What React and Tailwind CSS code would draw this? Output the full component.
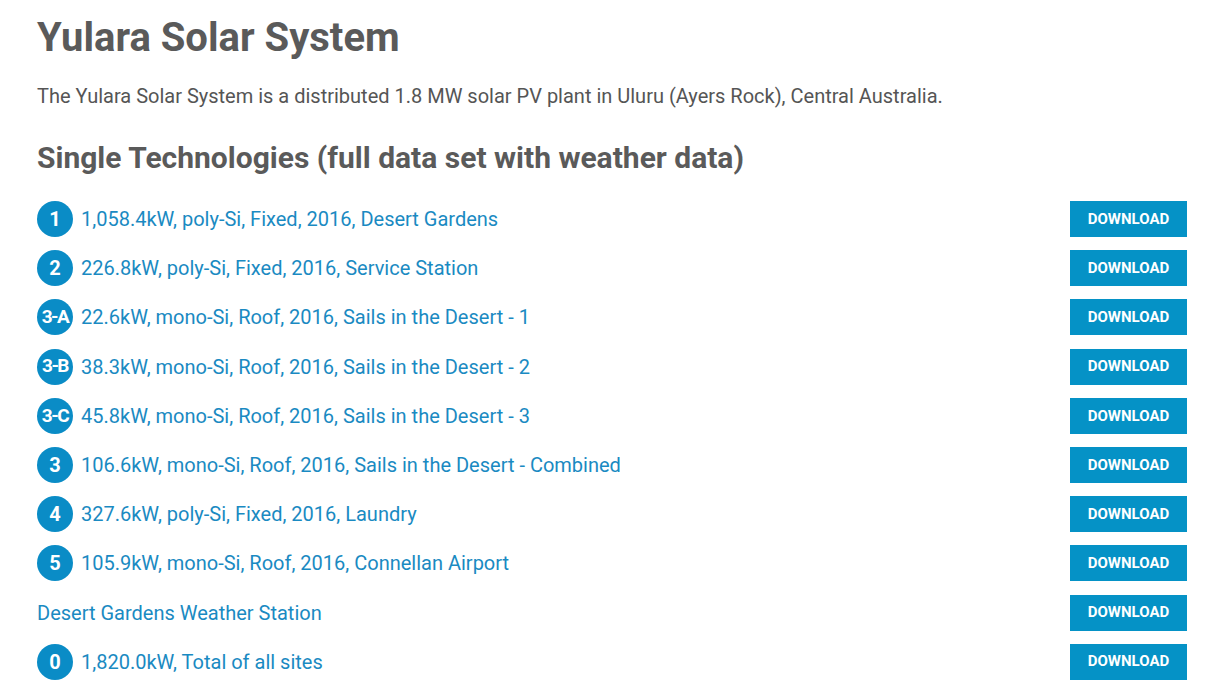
import React from 'react';

const rows = [
    { badge: '1', label: '1,058.4kW, poly-Si, Fixed, 2016, Desert Gardens' },
    { badge: '2', label: '226.8kW, poly-Si, Fixed, 2016, Service Station' },
    { badge: '3-A', label: '22.6kW, mono-Si, Roof, 2016, Sails in the Desert - 1' },
    { badge: '3-B', label: '38.3kW, mono-Si, Roof, 2016, Sails in the Desert - 2' },
    { badge: '3-C', label: '45.8kW, mono-Si, Roof, 2016, Sails in the Desert - 3' },
    { badge: '3', label: '106.6kW, mono-Si, Roof, 2016, Sails in the Desert - Combined' },
    { badge: '4', label: '327.6kW, poly-Si, Fixed, 2016, Laundry' },
    { badge: '5', label: '105.9kW, mono-Si, Roof, 2016, Connellan Airport' },
    { badge: null, label: 'Desert Gardens Weather Station' },
    { badge: '0', label: '1,820.0kW, Total of all sites' },
];

function Badge({ text }) {
    const long = text.length > 1;
    return (
        <span
            className={`w-9 h-9 rounded-full bg-[#0a8cc6] text-white font-bold flex items-center justify-center shrink-0 mr-2 overflow-hidden ${long ? 'text-[19px] tracking-[-1.5px]' : 'text-[20px]'}`}
        >
            {text}
        </span>
    );
}

export default function App() {
    return (
        <div className="w-full min-h-screen bg-white font-['Roboto',sans-serif] text-[#555555] pl-[37px] pr-[34px] pt-[14px]">
            <h1 className="text-[40px] font-bold leading-[48px] text-[#5a5a5a]">Yulara Solar System</h1>

            <p className="text-[20px] leading-[28px] mt-[20px]">
                The Yulara Solar System is a distributed 1.8 MW solar PV plant in Uluru (Ayers Rock), Central Australia.
            </p>

            <h2 className="text-[30px] font-bold leading-[36px] text-[#5a5a5a] mt-[30px]">
                Single Technologies (full data set with weather data)
            </h2>

            <div className="flex flex-col mt-[25px] gap-[13.2px]">
                {rows.map((row, i) => (
                    <div key={i} className="flex items-center justify-between h-9">
                        <a href="#" className="flex items-center text-[20px] text-[#1a8ac2]">
                            {row.badge && <Badge text={row.badge} />}
                            <span>{row.label}</span>
                        </a>
                        <button className="w-[117px] h-9 bg-[#0592c6] text-white text-[15px] font-bold">
                            DOWNLOAD
                        </button>
                    </div>
                ))}
            </div>
        </div>
    );
}
